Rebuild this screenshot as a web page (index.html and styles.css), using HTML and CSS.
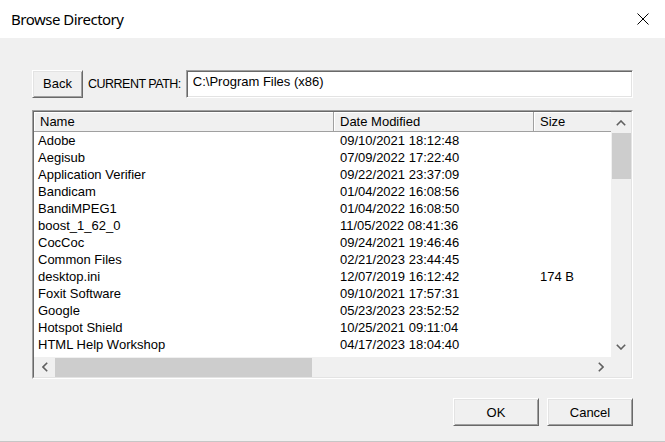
FILE: index.html
```html
<!DOCTYPE html>
<html>
<head>
<meta charset="utf-8">
<title>Browse Directory</title>
<link rel="stylesheet" href="styles.css">
</head>
<body>
<div class="window">
  <div class="titlebar">
    <span class="title">Browse Directory</span>
    <svg class="close" width="12" height="12" viewBox="0 0 12 12"><path d="M0.5 0.5 L11.5 11.5 M11.5 0.5 L0.5 11.5" stroke="#000" stroke-width="1" fill="none"/></svg>
  </div>
  <div class="content">
    <div class="pathbar">
      <button class="btn back">Back</button>
      <span class="label">CURRENT PATH:</span>
      <div class="textbox">C:\Program Files (x86)</div>
    </div>
    <div class="listview">
      <div class="list-inner">
        <div class="list-main">
          <div class="header">
            <div class="hcell">Name</div>
            <div class="hcell">Date Modified</div>
            <div class="hcell">Size</div>
          </div>
          <div class="rows">
            <div class="row"><span class="c-name">Adobe</span><span class="c-date">09/10/2021 18:12:48</span><span class="c-size"></span></div>
            <div class="row"><span class="c-name">Aegisub</span><span class="c-date">07/09/2022 17:22:40</span><span class="c-size"></span></div>
            <div class="row"><span class="c-name">Application Verifier</span><span class="c-date">09/22/2021 23:37:09</span><span class="c-size"></span></div>
            <div class="row"><span class="c-name">Bandicam</span><span class="c-date">01/04/2022 16:08:56</span><span class="c-size"></span></div>
            <div class="row"><span class="c-name">BandiMPEG1</span><span class="c-date">01/04/2022 16:08:50</span><span class="c-size"></span></div>
            <div class="row"><span class="c-name">boost_1_62_0</span><span class="c-date">11/05/2022 08:41:36</span><span class="c-size"></span></div>
            <div class="row"><span class="c-name">CocCoc</span><span class="c-date">09/24/2021 19:46:46</span><span class="c-size"></span></div>
            <div class="row"><span class="c-name">Common Files</span><span class="c-date">02/21/2023 23:44:45</span><span class="c-size"></span></div>
            <div class="row"><span class="c-name">desktop.ini</span><span class="c-date">12/07/2019 16:12:42</span><span class="c-size">174 B</span></div>
            <div class="row"><span class="c-name">Foxit Software</span><span class="c-date">09/10/2021 17:57:31</span><span class="c-size"></span></div>
            <div class="row"><span class="c-name">Google</span><span class="c-date">05/23/2023 23:52:52</span><span class="c-size"></span></div>
            <div class="row"><span class="c-name">Hotspot Shield</span><span class="c-date">10/25/2021 09:11:04</span><span class="c-size"></span></div>
            <div class="row"><span class="c-name">HTML Help Workshop</span><span class="c-date">04/17/2023 18:04:40</span><span class="c-size"></span></div>
            <div class="row"><span class="c-name">Internet Explorer</span><span class="c-date">05/08/2023 10:15:27</span><span class="c-size"></span></div>
          </div>
        </div>
        <div class="vscroll">
          <div class="sbtn"><svg width="10" height="6" viewBox="0 0 10 6"><polyline points="0.8,5.2 5,1 9.2,5.2" fill="none" stroke="#606060" stroke-width="1.6"/></svg></div>
          <div class="vtrack"><div class="vthumb"></div></div>
          <div class="sbtn"><svg width="10" height="6" viewBox="0 0 10 6"><polyline points="0.8,0.8 5,5 9.2,0.8" fill="none" stroke="#606060" stroke-width="1.6"/></svg></div>
        </div>
        <div class="hscroll">
          <div class="hbtn"><svg width="6" height="10" viewBox="0 0 6 10"><polyline points="5.2,0.8 1,5 5.2,9.2" fill="none" stroke="#606060" stroke-width="1.6"/></svg></div>
          <div class="htrack"><div class="hthumb"></div></div>
          <div class="hbtn"><svg width="6" height="10" viewBox="0 0 6 10"><polyline points="0.8,0.8 5,5 0.8,9.2" fill="none" stroke="#606060" stroke-width="1.6"/></svg></div>
        </div>
        <div class="corner"></div>
      </div>
    </div>
    <div class="actions">
      <button class="btn action">OK</button>
      <button class="btn action">Cancel</button>
    </div>
  </div>
</div>
</body>
</html>
```

FILE: styles.css
```css
html, body {
  margin: 0;
  padding: 0;
  width: 665px;
  height: 442px;
  overflow: hidden;
  background: #f0f0f0;
}

.window {
  width: 665px;
  height: 442px;
  box-sizing: border-box;
  border-bottom: 1px solid #c6c6c6;
  display: flex;
  flex-direction: column;
  font-family: "Liberation Sans", Arial, sans-serif;
  font-size: 13px;
  color: #000;
}

.titlebar {
  height: 38px;
  flex: none;
  background: #fff;
  display: flex;
  align-items: center;
  justify-content: space-between;
  padding: 0 16px 0 11px;
}

.title {
  font-family: "Noto Sans", "Open Sans", sans-serif;
  font-size: 15px;
  letter-spacing: -0.5px;
  color: #000;
}

.close {
  display: block;
}

.content {
  flex: 1;
  padding: 32px 32px 0;
  display: flex;
  flex-direction: column;
}

.pathbar {
  display: flex;
  align-items: center;
  height: 28px;
  gap: 5px;
}

.btn {
  font-family: "Liberation Sans", Arial, sans-serif;
  font-size: 13px;
  color: #000;
  background: #f0f0f0;
  box-sizing: border-box;
  height: 28px;
  padding: 0;
  margin: 0;
  border: 1px solid;
  border-color: #fff #696969 #696969 #fff;
  box-shadow: inset 1px 1px 0 #e3e3e3, inset -1px -1px 0 #a0a0a0;
  border-radius: 0;
}

.back {
  width: 51px;
  padding-bottom: 2px;
}

.label {
  font-size: 12.5px;
  letter-spacing: -0.5px;
  white-space: nowrap;
}

.textbox {
  flex: 1;
  height: 28px;
  box-sizing: border-box;
  background: #fff;
  border: 1px solid;
  border-color: #a0a0a0 #fff #fff #a0a0a0;
  box-shadow: inset 1px 1px 0 #696969, inset -1px -1px 0 #e3e3e3;
  padding: 3px 5px 2px 6px;
  line-height: 15px;
  white-space: nowrap;
}

.listview {
  margin-top: 12px;
  height: 269px;
  box-sizing: border-box;
  border: 1px solid;
  border-color: #a0a0a0 #fff #fff #a0a0a0;
}

.list-inner {
  height: 100%;
  box-sizing: border-box;
  border: 1px solid;
  border-color: #696969 #e3e3e3 #e3e3e3 #696969;
  display: grid;
  grid-template-columns: 1fr 20px;
  grid-template-rows: 1fr 20px;
}

.list-main {
  background: #fff;
  overflow: hidden;
  display: flex;
  flex-direction: column;
}

.header {
  display: grid;
  grid-template-columns: 300px 200px 1fr;
  height: 20px;
  flex: none;
}

.hcell {
  box-sizing: border-box;
  background: #f0f0f0;
  border-right: 1px solid #a0a0a0;
  border-bottom: 1px solid #a0a0a0;
  box-shadow: inset 1px 1px 0 #fff;
  padding-left: 6px;
  line-height: 20px;
  white-space: nowrap;
  overflow: hidden;
}

.hcell:last-child {
  border-right: none;
}

.rows {
  flex: 1;
  overflow: hidden;
}

.row {
  display: grid;
  grid-template-columns: 300px 200px 1fr;
  height: 17px;
  line-height: 17px;
  white-space: nowrap;
}

.c-name {
  padding-left: 4px;
  overflow: hidden;
}

.c-date {
  padding-left: 6px;
}

.c-size {
  padding-left: 6px;
}

.vscroll {
  background: #f0f0f0;
  display: flex;
  flex-direction: column;
}

.sbtn {
  height: 21px;
  flex: none;
  display: flex;
  align-items: center;
  justify-content: center;
}

.vtrack {
  flex: 1;
  padding-left: 1px;
}

.vthumb {
  height: 46px;
  background: #cdcdcd;
}

.hscroll {
  background: #f0f0f0;
  display: flex;
}

.hbtn {
  width: 21px;
  flex: none;
  display: flex;
  align-items: center;
  justify-content: center;
}

.htrack {
  flex: 1;
  padding-top: 1px;
}

.hthumb {
  width: 257px;
  height: 19px;
  background: #cdcdcd;
}

.corner {
  background: #f0f0f0;
}

.actions {
  margin-top: 19px;
  display: flex;
  justify-content: flex-end;
  gap: 8px;
}

.action {
  width: 86px;
}
```
